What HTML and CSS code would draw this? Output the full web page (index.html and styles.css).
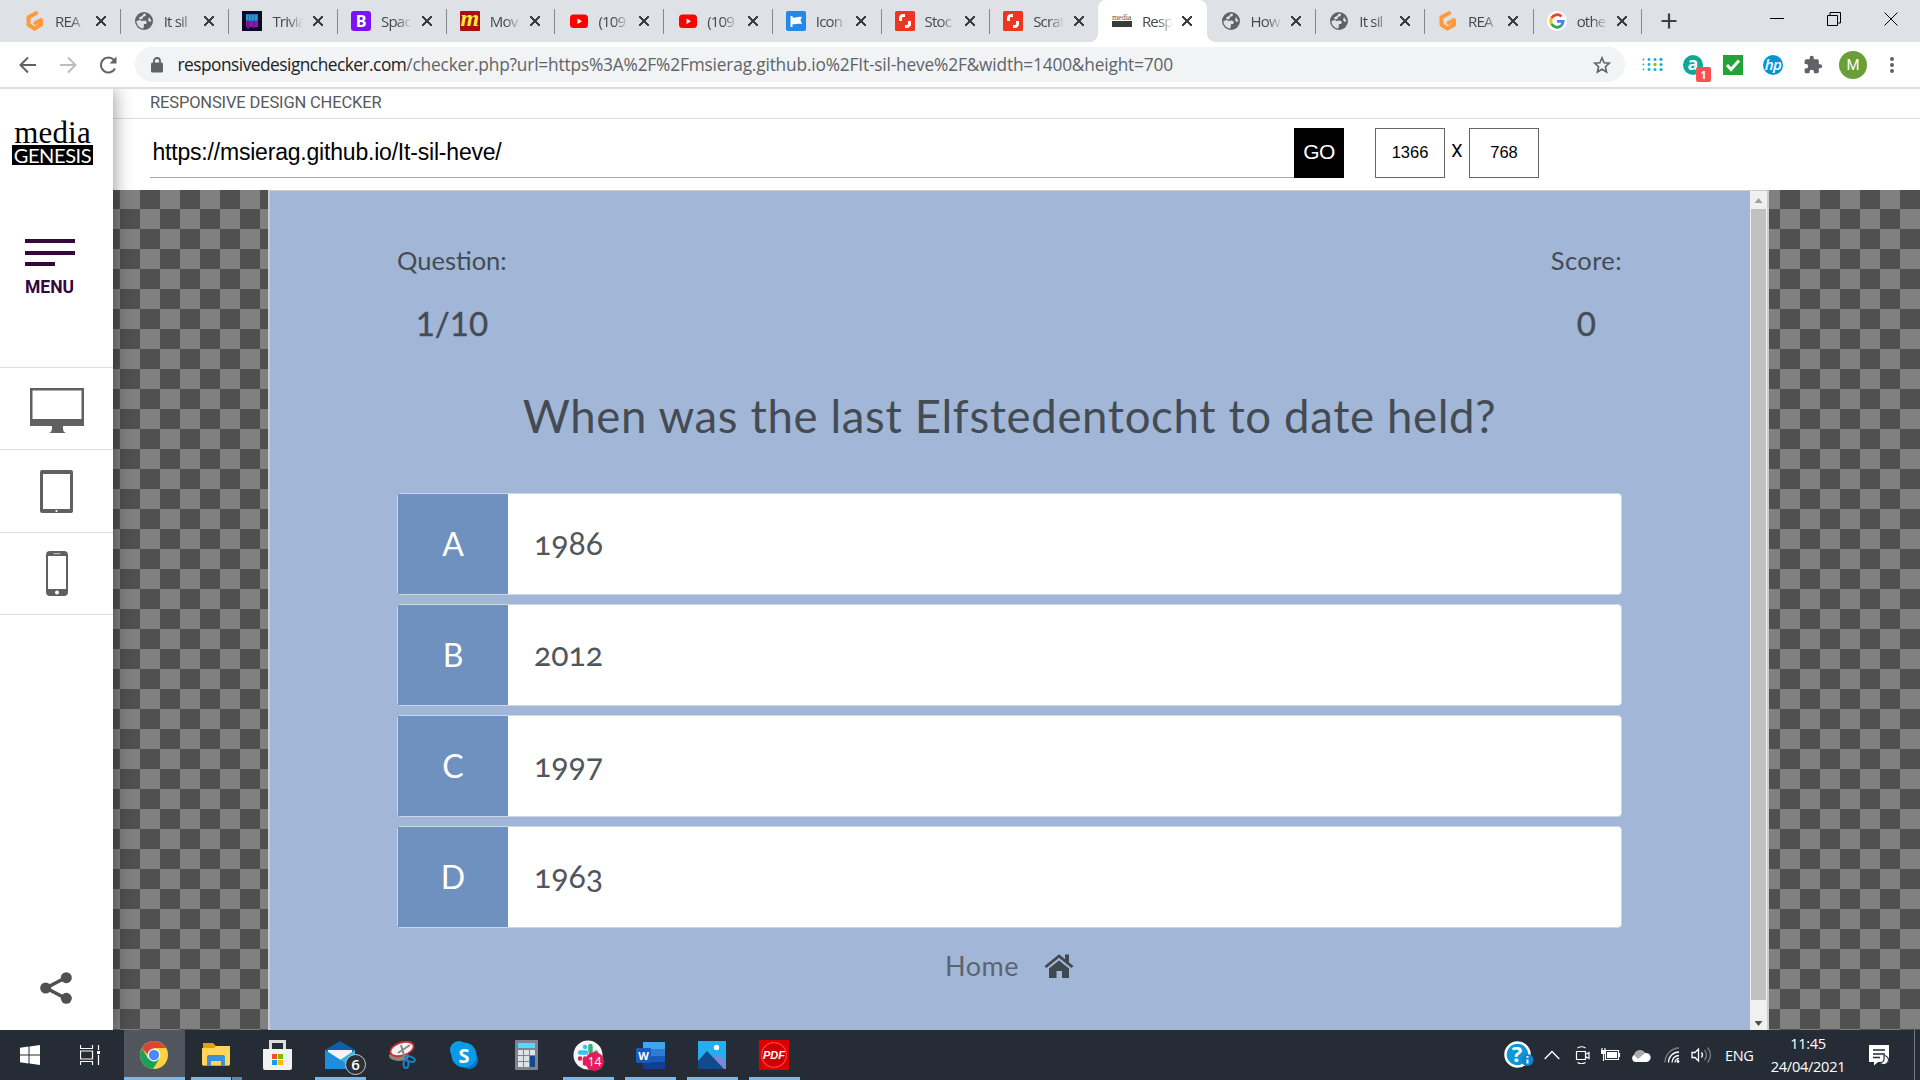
FILE: index.html
```
<!DOCTYPE html>
<html lang="en">
<head>
<meta charset="utf-8">
<title>Responsive Design Checker</title>
<link rel="stylesheet" href="styles.css">
</head>
<body>
<svg class="defs" width="0" height="0">
  <symbol id="globe" viewBox="0 0 20 20"><circle cx="10" cy="10" r="9" fill="#5f6368"/><path d="M10 2.500c2 0 2.500 1 1.500 2.500L9 6l-.5 2L6 8.500 7 10l4-.5 2 1.500-1 2h-2l-.5 4.500C5 17 2.500 14 2.500 10L6 9 5 6.500 8 5zM15 6l2.500 4-2 1-1.500-2z" fill="#dee1e6"/></symbol>
  <symbol id="gitpod" viewBox="0 0 20 20"><path d="M11 2.200 3.500 6.300v7.400l6 3.900 6.500-3.900V9l-5.500 3" fill="none" stroke="#ff9a3c" stroke-width="4" stroke-linejoin="round" stroke-linecap="round"/></symbol>
  <symbol id="youtube" viewBox="0 0 20 20"><rect x="2" y="3.500" width="18" height="13.500" rx="3.500" fill="#f00"/><path d="M9.500 7.500v5.500l4.500-2.750z" fill="#fff"/></symbol>
  <symbol id="shutter" viewBox="0 0 20 20"><rect width="20" height="20" rx="1.500" fill="#ee3524"/><path d="M10 4.500H8a2.500 2.500 0 0 0-2.500 2.500v3M10 15.500h2a2.500 2.500 0 0 0 2.500-2.500v-3" fill="none" stroke="#fff" stroke-width="3"/></symbol>
</svg>

<header class="tabs">
  <div class="tab"><svg class="fav"><use href="#gitpod"/></svg><span class="name">REA</span><span class="x"></span></div>
  <div class="tab"><svg class="fav"><use href="#globe"/></svg><span class="name">It sil</span><span class="x"></span></div>
  <div class="tab"><svg class="fav" viewBox="0 0 20 20"><rect width="20" height="20" fill="#0a0a28"/><rect x="4" y="3" width="12" height="7" fill="#1878b8"/><path d="M5 4v5M8 4v5M11 4v5M14 4v5" stroke="#40b8e0"/><rect x="4" y="10" width="12" height="6" fill="#a010a0"/><path d="M6 10v8M12 11v6" stroke="#5a1aa0" stroke-width="2"/></svg><span class="name">Trivia</span><span class="x"></span></div>
  <div class="tab"><span class="fav letter purple">B</span><span class="name">Spac</span><span class="x"></span></div>
  <div class="tab"><span class="fav letter red">m</span><span class="name">Mov</span><span class="x"></span></div>
  <div class="tab"><svg class="fav"><use href="#youtube"/></svg><span class="name">(109</span><span class="x"></span></div>
  <div class="tab"><svg class="fav"><use href="#youtube"/></svg><span class="name">(109</span><span class="x"></span></div>
  <div class="tab"><svg class="fav" viewBox="0 0 20 20"><rect width="20" height="20" rx="2" fill="#228ae6"/><path d="M5.500 5v11" stroke="#fff" stroke-width="2"/><path d="M6 6c3 2 5-1 10 0l-1.500 3 1.500 4c-5-1-7 1-10 0z" fill="#fff"/></svg><span class="name">Icon</span><span class="x"></span></div>
  <div class="tab"><svg class="fav"><use href="#shutter"/></svg><span class="name">Stoc</span><span class="x"></span></div>
  <div class="tab"><svg class="fav"><use href="#shutter"/></svg><span class="name">Scrat</span><span class="x"></span></div>
  <div class="tab active"><span class="fav mini"><i>media</i><b></b></span><span class="name">Resp</span><span class="x"></span></div>
  <div class="tab"><svg class="fav"><use href="#globe"/></svg><span class="name">How</span><span class="x"></span></div>
  <div class="tab"><svg class="fav"><use href="#globe"/></svg><span class="name">It sil</span><span class="x"></span></div>
  <div class="tab"><svg class="fav"><use href="#gitpod"/></svg><span class="name">REA</span><span class="x"></span></div>
  <div class="tab"><svg class="fav" viewBox="0 0 20 20"><circle cx="10" cy="10" r="10" fill="#fff"/><g fill="none" stroke-width="2.800"><path d="M14.500 5.600A6.200 6.200 0 0 0 4.600 7" stroke="#ea4335"/><path d="M4.600 7a6.200 6.200 0 0 0 0 6" stroke="#fbbc05"/><path d="M4.600 13a6.200 6.200 0 0 0 9.600 1.600" stroke="#34a853"/><path d="M14.200 14.600A6.200 6.200 0 0 0 16.200 10.300H10" stroke="#4285f4"/></g></svg><span class="name">othe</span><span class="x"></span></div>
  <svg class="plus" viewBox="0 0 16 16"><path d="M8 .5v15M.5 8h15" stroke="#3c4043" stroke-width="2.200"/></svg>
  <div class="wincontrols">
    <svg width="14" height="14"><path d="M0 6.500h14" stroke="#000"/></svg>
    <svg width="14" height="14"><path d="M.5 3.500h10v10H.5zM3 3V.5h10.500V11H11" fill="none" stroke="#000"/></svg>
    <svg width="14" height="14"><path d="M.5.5l13 13M13.500.5l-13 13" stroke="#000"/></svg>
  </div>
</header>

<nav class="toolbar">
  <svg class="nav" viewBox="0 0 20 20"><path d="M18 10H3M10 2.500 2.500 10l7.500 7.500" stroke="#5f6368"/></svg>
  <svg class="nav" viewBox="0 0 20 20"><path d="M2 10h15M10 2.500l7.500 7.500-7.500 7.500" stroke="#babcbe"/></svg>
  <svg class="nav" viewBox="0 0 20 20"><path d="M17 13.500A7.500 7.500 0 1 1 16 5" stroke="#5f6368"/><path d="M18.500 1.500V8.500h-7z" fill="#5f6368"/></svg>
  <div class="omnibox">
    <svg width="12" height="16" viewBox="0 0 12 16"><rect x="0" y="5.500" width="12" height="10" rx="1.500" fill="#5f6368"/><path d="M3 6V4a3 3 0 0 1 6 0v2" fill="none" stroke="#5f6368" stroke-width="1.800"/></svg>
    <span class="address"><b>responsivedesignchecker.com</b>/checker.php?url=https%3A%2F%2Fmsierag.github.io%2FIt-sil-heve%2F&amp;width=1400&amp;height=700</span>
    <svg width="18" height="18" viewBox="0 0 18 18"><path d="M9 1.800l2.100 5 5.300.4-4 3.500 1.200 5.300L9 13.200 4.400 16l1.200-5.300-4-3.500 5.300-.4z" fill="none" stroke="#5f6368" stroke-width="1.600"/></svg>
  </div>
  <div class="extensions">
    <svg width="21" height="13" viewBox="0 0 21 13" fill="#12b0e4"><circle cx="1.500" cy="1.500" r=".9"/><circle cx="1.500" cy="6.500" r=".9"/><circle cx="1.500" cy="11.500" r=".9"/><circle cx="7" cy="1.500" r="1.400"/><circle cx="7" cy="6.500" r="1.400"/><circle cx="7" cy="11.500" r="1.400"/><circle cx="13" cy="1.500" r="1.500"/><circle cx="13" cy="6.500" r="1.700" fill="#8cc220"/><circle cx="13" cy="11.500" r="1.500"/><circle cx="19" cy="1.500" r="1.600"/><circle cx="19" cy="6.500" r="1.600"/><circle cx="19" cy="11.500" r="1.600"/></svg>
    <span class="ext teal">a<em>1</em></span>
    <svg width="20" height="20"><rect width="20" height="20" fill="#21a336"/><path d="M4 10l4 4.500 8-9" fill="none" stroke="#fff" stroke-width="3"/></svg>
    <span class="ext hp">hp</span>
    <svg width="20" height="20" viewBox="0 0 24 24"><path fill="#5f6368" d="M20.500 11H19V7a2 2 0 0 0-2-2h-4V3.500a2.500 2.500 0 0 0-5 0V5H4a2 2 0 0 0-2 2v3.800h1.500a2.700 2.700 0 0 1 0 5.400H2V20a2 2 0 0 0 2 2h3.800v-1.500a2.700 2.700 0 0 1 5.400 0V22H17a2 2 0 0 0 2-2v-4h1.500a2.500 2.500 0 0 0 0-5z"/></svg>
    <span class="avatar">M</span>
    <svg width="4" height="18"><circle cx="2" cy="3" r="2" fill="#5f6368"/><circle cx="2" cy="9" r="2" fill="#5f6368"/><circle cx="2" cy="15" r="2" fill="#5f6368"/></svg>
  </div>
</nav>

<div class="page">
  <aside class="sidebar">
    <div class="brand"><span class="media">media</span><span class="genesis">GENESIS</span></div>
    <div class="menu"><i></i><i></i><i></i><span>MENU</span></div>
    <div class="device"><svg class="monitor" width="54" height="47" viewBox="0 0 54 47"><path fill-rule="evenodd" d="M0 1h54v38H0zM2.500 3.500v28.500h49v-28.500zM22 39h11c0 5 .5 6 3 7H19c2.500-1 3-2 3-7z" fill="#606060"/></svg></div>
    <div class="device"><svg class="tablet" width="33" height="43" viewBox="0 0 33 43"><path fill-rule="evenodd" d="M2 0h29a2 2 0 0 1 2 2v39a2 2 0 0 1-2 2H2a2 2 0 0 1-2-2V2a2 2 0 0 1 2-2zM3 4v35h27V4z" fill="#606060"/><circle cx="16.500" cy="41" r="1.100" fill="#fff"/></svg></div>
    <div class="device"><svg width="22" height="45" viewBox="0 0 22 45"><path fill-rule="evenodd" d="M4 0h14a4 4 0 0 1 4 4v37a4 4 0 0 1-4 4H4a4 4 0 0 1-4-4V4a4 4 0 0 1 4-4zM2 5v33h18V5z" fill="#606060"/><path d="M7.500 2.700h7" stroke="#ccc"/><circle cx="11" cy="41.500" r="2" fill="#fff"/></svg></div>
    <div class="share"><svg width="32" height="32" viewBox="0 0 32 32"><path d="M26 5.500 6 16l20 10.500" fill="none" stroke="#505050" stroke-width="3.500"/><circle cx="5.700" cy="16" r="5.500" fill="#505050"/><circle cx="26.300" cy="5.700" r="5.500" fill="#505050"/><circle cx="26.300" cy="26.300" r="5.500" fill="#505050"/></svg></div>
  </aside>
  <main class="main">
    <div class="titlebar"><span>RESPONSIVE DESIGN CHECKER</span></div>
    <div class="form">
      <div class="url">https://msierag.github.io/It-sil-heve/</div>
      <div class="go">GO</div>
      <div class="size">1366</div><span class="by">X</span><div class="size">768</div>
    </div>
    <div class="stage">
      <div class="frame">
        <div class="quiz">
          <div class="hud">
            <div><p class="lbl">Question:</p><p class="val">1/10</p></div>
            <div><p class="lbl wide">Score:</p><p class="val">0</p></div>
          </div>
          <h1>When was the last Elfstedentocht to date held?</h1>
          <div class="choices">
            <div class="choice"><b>A</b><span>1986</span></div>
            <div class="choice"><b>B</b><span>2012</span></div>
            <div class="choice"><b>C</b><span>1997</span></div>
            <div class="choice"><b>D</b><span>1963</span></div>
          </div>
          <div class="home"><span>Home</span><svg width="30" height="24" viewBox="0 0 30 24"><path d="M1.500 13 15 2l13.500 11" fill="none" stroke="#3f474f" stroke-width="2.800"/><path d="M21 .5h4V9l-4-3.500zM15 6.500 25 14.500V24h-7v-7h-5.500v7H5v-9.500z" fill="#3f474f"/></svg></div>
        </div>
        <div class="scroll"><i class="up"></i><div class="thumb"></div><i class="down"></i></div>
      </div>
    </div>
  </main>
</div>

<footer class="taskbar">
  <div class="slot narrow"><svg width="20" height="20" viewBox="0 0 20 20"><path d="M0 2.800 8.500 1.600V9.500H0zM9.500 1.400 20 0v9.500H9.500zM0 10.500h8.500v8L0 17.300zM9.500 10.500H20V20L9.500 18.600z" fill="#fff"/></svg></div>
  <div class="slot narrow"><svg width="20" height="20" viewBox="0 0 20 20"><path d="M.5 0v3.500h12V0M.5 20v-3.500h12V20M.5 6h12v8H.5zM18.500 0v5M18.500 10v10" fill="none" stroke="#fff" stroke-width="1.200"/><rect x="17" y="6" width="3" height="3" fill="#fff"/></svg></div>
  <div class="slot current"><svg width="28" height="28" viewBox="0 0 28 28"><circle cx="14" cy="14" r="14" fill="#fdd23e"/><path d="M1.900 7A14 14 0 0 1 26.100 7H14v14z" fill="#db4437"/><path d="M1.900 7A14 14 0 0 0 13 28l6.500-10.500H8z" fill="#1a9f5c"/><circle cx="14" cy="14" r="6.400" fill="#fff"/><circle cx="14" cy="14" r="5.200" fill="#4c8bf5"/></svg></div>
  <div class="slot open multi"><svg width="28" height="24" viewBox="0 0 28 24"><path d="M1 0h10l3 3h13v20H1z" fill="#e2a106"/><path d="M0 5h12l2-2h14v19H0z" fill="#ffd65c"/><path d="M5 14q0-2 2-2h14q2 0 2 2v9h-4v-5H9v5H5z" fill="#3a93d8"/></svg></div>
  <div class="slot store"><svg width="29" height="31" viewBox="0 0 29 31"><path d="M7.500 9V1.500h14V9" fill="none" stroke="#ddd" stroke-width="3"/><path d="M0 9h29v19q0 2-2 2H2q-2 0-2-2z" fill="#f2f2f2"/><path d="M9 14h5v5H9z" fill="#f25022"/><path d="M15 14h5v5h-5z" fill="#7fba00"/><path d="M9 20h5v5H9z" fill="#00a4ef"/><path d="M15 20h5v5h-5z" fill="#ffb900"/></svg></div>
  <div class="slot open"><svg width="30" height="28" viewBox="0 0 30 28"><path d="M0 9 15 0l15 9v3H0z" fill="#0f5ea8"/><path d="M3 9h24v10H3z" fill="#f4f4f4"/><path d="M0 9l15 10L30 9v19H0z" fill="#32b5ee"/><path d="M0 9l22 14 8 5H0z" fill="#1e8edb"/></svg><span class="badge dark">6</span></div>
  <div class="slot"><svg width="28" height="28" viewBox="0 0 28 28"><ellipse cx="11" cy="15" rx="10" ry="5" fill="#888"/><ellipse cx="14" cy="8" rx="12" ry="6.500" transform="rotate(-18 14 8)" fill="#f4f4f4" stroke="#c8312e" stroke-width="1.800"/><path d="M13 4l4 14M22 4 10 12" stroke="#888" stroke-width="2"/><g fill="none" stroke="#1883c4" stroke-width="2"><ellipse cx="22" cy="18" rx="5" ry="2.500" transform="rotate(20 22 18)"/><ellipse cx="18" cy="23" rx="2.500" ry="4"/></g></svg></div>
  <div class="slot"><svg width="28" height="28" viewBox="0 0 28 28"><circle cx="9" cy="9" r="9" fill="#0f9fe8"/><circle cx="19" cy="19" r="9" fill="#0078d4"/><circle cx="14" cy="14" r="12.500" fill="#0a9be6"/><text x="14" y="21.500" class="skype">S</text></svg></div>
  <div class="slot"><svg width="23" height="30" viewBox="0 0 23 30"><rect width="23" height="30" rx="1" fill="#7c858f"/><path d="M3 3h17v5H3z" fill="#50dcff"/><path d="M3 10h5v5H3zM9 10h5v5H9zM15 10h5v5h-5zM3 16h5v5H3zM9 16h5v5H9zM3 22h5v5H3zM9 22h5v5H9z" fill="#dfe3e8"/><path d="M15 16h5v11h-5z" fill="#144a8c"/></svg></div>
  <div class="slot open"><svg width="30" height="30" viewBox="0 0 30 30"><circle cx="15" cy="15" r="14.500" fill="#f6f6f6"/><g stroke-width="4.400" stroke-linecap="round"><path d="M12 7v.1M7 12.500h6" stroke="#36c5f0"/><path d="M17.500 6v6M23 12.500h.1" stroke="#2eb67d"/><path d="M7 18.500h.1M12 18.500v5" stroke="#e01e5a"/></g></svg><span class="badge pink">14</span></div>
  <div class="slot open"><svg width="29" height="27" viewBox="0 0 29 27"><path d="M7 0h22v7H7z" fill="#41a5ee"/><path d="M7 7h22v7H7z" fill="#2b7cd3"/><path d="M7 14h22v6H7z" fill="#185abd"/><path d="M7 20h22v7H7z" fill="#103f91"/><rect y="6" width="15" height="15" rx="1" fill="#185abd"/><text x="7.500" y="17.500" class="word">W</text></svg></div>
  <div class="slot open"><svg width="28" height="28" viewBox="0 0 28 28"><path d="M0 0h28v28H0z" fill="#23aef0"/><path d="M12 22l8-9 8 8v7H12z" fill="#7a88d6"/><path d="M0 20 9 10l17 18H0z" fill="#144a8c"/><circle cx="18.500" cy="6.500" r="2.700" fill="#fff"/></svg></div>
  <div class="slot open"><span class="pdf">PDF</span></div>
  <div class="tray">
    <svg class="t-help" width="30" height="28" viewBox="0 0 30 28"><circle cx="13.500" cy="13.500" r="12" fill="#0e97d8" stroke="#fff" stroke-width="2.500"/><text x="13" y="21" class="q-mark">?</text><circle cx="23.500" cy="19" r="6" fill="#0e86cf"/><path d="M23.500 18.500v4M23.500 15v1.800" stroke="#fff" stroke-width="2"/></svg>
    <svg class="t-chev" width="16" height="10"><path d="M.7 9 8 1.500 15.300 9" fill="none" stroke="#fff" stroke-width="1.300"/></svg>
    <svg class="t-cam" width="16" height="18" viewBox="0 0 16 18"><path d="M1.500 5.500h9v8h-9zM10.500 8.500 14 6.500v6l-3.500-2M2.500 2Q6.500-.5 10.500 2M2.500 16.500q4 2.500 8 0" fill="none" stroke="#fff" stroke-width="1.200"/></svg>
    <svg class="t-bat" width="20" height="14" viewBox="0 0 20 14"><path d="M4.500 2.500h13v9H4.500zM18.500 5v4M1 0v2M4 0v2M2.500 6v7" fill="none" stroke="#fff" stroke-width="1.200"/><path d="M6 4h10v6H6zM0 2h5v4H0z" fill="#fff"/></svg>
    <svg class="t-cloud" width="20" height="13" viewBox="0 0 20 13"><path d="M4 13a4 4 0 0 1-.5-7.500A6 6 0 0 1 14 4a4.500 4.500 0 0 1 2 9z" fill="#fff"/><path d="M3 6a6 6 0 0 1 11-2l-7 6z" fill="#aaa"/></svg>
    <svg class="t-wifi" width="16" height="16" viewBox="0 0 16 16" fill="none" stroke-width="1.300"><path d="M1 15.500A14.500 14.500 0 0 1 15 1" stroke="#7a8088"/><path d="M4.500 15.500A10.500 10.500 0 0 1 15 5M8 15.500A7 7 0 0 1 15 8.500M11 15.500a4 4 0 0 1 4-4" stroke="#fff"/><circle cx="14" cy="14.500" r="1.400" fill="#fff"/></svg>
    <svg class="t-vol" width="21" height="16" viewBox="0 0 21 16" fill="none" stroke-width="1.300"><path d="M1 5.500h3L7.500 2v12L4 10.500H1zM10.500 5.500q2 2.500 0 5" stroke="#fff"/><path d="M13.500 3q4 5 0 10M16.500.5q6 7.500 0 15" stroke="#7a8088"/></svg>
    <span class="lang">ENG</span>
    <div class="clock"><span>11:45</span><span>24/04/2021</span></div>
    <svg class="t-note" width="21" height="21" viewBox="0 0 21 21"><path d="M0 0h20v17H9l-4 3.500V17H0z" fill="#fff"/><path d="M4 5h12M4 9h12M4 12.500h7" stroke="#252c36" stroke-width="1.300"/><path d="M15 10.500a4.600 4.600 0 1 1-4 7q5 .5 4-7z" fill="#fff" stroke="#252c36" stroke-width="1.200"/></svg>
    <i class="peek"></i>
  </div>
</footer>
</body>
</html>
```
FILE: styles.css
```
* { box-sizing: border-box; }
body { margin: 0; width: 1920px; height: 1080px; overflow: hidden; display: flex; flex-direction: column; background: #fff; font-family: "Open Sans", sans-serif; }
svg { display: block; flex: none; }
p, h1 { margin: 0; font-weight: 400; }
.defs { position: absolute; }

/* browser tabs */
.tabs { height: 42px; flex: none; background: #dee1e6; display: flex; align-items: center; padding-left: 11px; }
.tab { width: 108.700px; height: 42px; flex: none; display: flex; align-items: center; padding-left: 14px; position: relative; }
.tab::after { content: ""; position: absolute; right: -1px; top: 9px; width: 1px; height: 25px; background: #85888c; }
.fav { width: 20px; height: 20px; }
.name { width: 31px; margin-left: 10px; font-size: 15px; letter-spacing: -.8px; color: #45494d; overflow: hidden; white-space: nowrap; -webkit-mask-image: linear-gradient(90deg, #000 50%, transparent); mask-image: linear-gradient(90deg, #000 50%, transparent); }
.x { width: 10px; height: 10px; margin-left: 9.500px; background: linear-gradient(45deg, transparent 43%, #3c4043 43% 57%, transparent 57%), linear-gradient(-45deg, transparent 43%, #3c4043 43% 57%, transparent 57%); }
.letter { border-radius: 3px; color: #fff; text-align: center; font: 700 16px/20px "Open Sans", sans-serif; }
.purple { background: #7a12f5; }
.red { background: #a80f0f; color: #ffe83a; border-radius: 1px; font: italic 700 24px/15px "Liberation Serif", serif; }
.active { background: #fff; border-radius: 8px 8px 0 0; }
.active::before { content: ""; position: absolute; left: -8px; right: -8px; bottom: 0; height: 8px; background: radial-gradient(circle at 0 0, transparent 7.500px, #fff 8px) 0 0 / 8px 8px no-repeat, radial-gradient(circle at 100% 0, transparent 7.500px, #fff 8px) 100% 0 / 8px 8px no-repeat; }
.active::after, .tab:has(+ .active)::after { display: none; }
.mini { display: flex; flex-direction: column; justify-content: center; }
.mini i { font: 8px/6px "Liberation Serif", serif; color: #555; }
.mini b { background: #3a3a3a; height: 6px; }
.plus { width: 16px; height: 16px; margin-left: 20px; }
.wincontrols { margin-left: auto; display: flex; gap: 43px; padding: 0 22px 4px 0; }

/* address bar */
.toolbar { height: 47px; flex: none; display: flex; align-items: center; padding-left: 18px; border-bottom: 2px solid #dadce0; }
.nav { width: 20px; height: 20px; margin-right: 20px; fill: none; stroke-width: 2; }
.omnibox { width: 1490px; height: 35px; margin-left: -3px; border-radius: 18px; background: #f1f3f4; display: flex; align-items: center; padding: 0 14px 0 16px; }
.address { flex: 1; margin-left: 14.500px; font-size: 17.300px; letter-spacing: -.17px; color: #5f6368; white-space: nowrap; }
.address b { font-weight: 400; color: #202124; letter-spacing: -.5px; }
.extensions { display: flex; align-items: center; gap: 20px; padding-left: 17px; }
.ext { width: 20px; height: 20px; border-radius: 50%; color: #fff; text-align: center; font: 700 18px/17px "Open Sans", sans-serif; position: relative; }
.teal { background: #0fa898; }
.ext em { position: absolute; left: 13px; top: 12px; width: 15px; height: 15px; border-radius: 2px; background: #fc4f4f; font: 700 11px/15px "Open Sans", sans-serif; }
.hp { background: #0096d6; font: italic 600 15px/18px "Open Sans", sans-serif; letter-spacing: -.5px; }
.avatar { width: 28px; height: 28px; border-radius: 50%; background: #689f38; color: #fff; text-align: center; font: 15px/28px Roboto, sans-serif; margin: 0 3px 0 -4px; }

/* checker page */
.page { flex: 1; display: flex; min-height: 0; }
.sidebar { width: 113px; flex: none; background: #fff; display: flex; flex-direction: column; position: relative; box-shadow: 0 0 18px rgba(0,0,0,.45); clip-path: inset(0 -20px 0 0); }
.brand { height: 150px; padding: 28px 0 0 12px; display: flex; flex-direction: column; }
.media { width: 81px; height: 28px; text-align: center; font: 31px/31px "Liberation Serif", serif; letter-spacing: .2px; color: #000; }
.genesis { width: 81px; height: 20px; background: #000; color: #fff; text-align: center; font: 20px/20px Lato, sans-serif; letter-spacing: -.4px; }
.menu { height: 128px; padding-left: 25px; display: flex; flex-direction: column; gap: 7.500px; }
.menu i { width: 50px; height: 4px; background: #35083c; }
.menu i:nth-child(3) { width: 30px; }
.menu span { margin-top: 3px; font: 700 17.500px/20px Roboto, sans-serif; color: #35083c; letter-spacing: 0; }
.device { height: 82.300px; border-top: 1px solid #ddd; display: flex; align-items: center; justify-content: center; }
.monitor { margin-top: 3px; }
.tablet { margin-top: 1px; }
.share { flex: 1; border-top: 1px solid #ddd; display: flex; align-items: flex-end; justify-content: center; padding: 0 1px 26px 0; }
.main { flex: 1; display: flex; flex-direction: column; }
.titlebar { height: 30px; border-bottom: 1px solid #ddd; padding-left: 37px; font: 16.500px/27px Roboto, sans-serif; color: #58595b; letter-spacing: -.15px; }
.form { height: 71px; padding: 9px 0 12px 37px; display: flex; align-items: stretch; font-family: "Liberation Sans", sans-serif; color: #000; }
.url { width: 1144px; border-bottom: 1px solid #aaa; padding-left: 2.500px; font-size: 23px; letter-spacing: -.2px; line-height: 48px; }
.go { width: 50px; background: #000; color: #fff; text-align: center; font-size: 21px; letter-spacing: -.5px; line-height: 48px; margin-right: 31px; }
.size { width: 70px; border: 1px solid #666; text-align: center; font-size: 16.500px; line-height: 47px; }
.by { width: 24px; text-align: center; font: 18px/46px Roboto, sans-serif; }
.stage { flex: 1; padding-left: 155px; background: conic-gradient(#505050 25%, #808080 0 50%, #505050 0 75%, #808080 0) 7px -1px / 40px 40px; display: flex; }
.frame { width: 1501px; border: solid #ccc; border-width: 1px 2px 0; display: flex; }
.quiz { flex: 1; background: #a2b7d7; padding: 0 128px 0 127px; font-family: Lato, sans-serif; color: #444b53; }
.hud { display: flex; justify-content: space-between; text-align: center; padding-top: 51px; height: 176px; }
.lbl { font-size: 25.500px; line-height: 36px; letter-spacing: 0; }
.wide { letter-spacing: .4px; }
.val { font-size: 33px; line-height: 44px; margin-top: 23px; -webkit-text-stroke: .4px; }
h1 { text-align: center; font-size: 45.500px; letter-spacing: .650px; line-height: 98px; white-space: nowrap; }
.choices { margin-top: 28px; display: flex; flex-direction: column; gap: 9px; }
.choice { height: 102px; border: 1px solid #ccd6e4; border-radius: 4px; background: #fff; display: flex; align-items: center; }
.choice b { width: 110px; height: 100px; background: #6f91c0; color: #fff; font-weight: 400; font-size: 32px; line-height: 99px; text-align: center; }
.choice span { margin: 0 0 4px 26px; font-size: 32px; font-variant-numeric: oldstyle-nums; color: #50565c; }
.home { display: flex; align-items: center; justify-content: center; gap: 25px; padding-top: 18px; font-size: 27px; letter-spacing: .5px; line-height: 40px; }
.home span { color: #5b656f; }
.scroll { width: 17px; background: #f0f0f0; display: flex; flex-direction: column; align-items: center; }
.up, .down { width: 8px; flex: none; }
.up { height: 18px; background: #a0a0a0; clip-path: polygon(50% 7px, 100% 12px, 0 12px); }
.down { height: 30px; background: #505050; clip-path: polygon(0 21px, 100% 21px, 50% 26px); }
.thumb { flex: 1; width: 15px; background: #c1c1c1; }

/* taskbar */
.taskbar { height: 50px; flex: none; background: #252c36; display: flex; color: #fff; }
.slot { width: 62px; height: 50px; display: flex; align-items: center; justify-content: center; position: relative; padding-right: 2px; }
.narrow { width: 60px; padding: 0; }
.narrow + .narrow { width: 64px; padding-right: 4px; }
.current { background: #50555e; width: 61px; border-bottom: 3px solid #76b9ed; margin-right: 1px; padding-top: 3px; }
.store { padding-right: 3px; }
.open::after { content: ""; position: absolute; left: 5px; bottom: 0; width: 51px; height: 3px; background: #76b9ed; }
.multi::after { background: linear-gradient(90deg, #76b9ed 40px, #252c36 40px 41px, #5a89ae 41px); }
.badge { position: absolute; border-radius: 50%; text-align: center; }
.dark { left: 35px; top: 24px; width: 21px; height: 21px; background: #2a3038; border: 1px solid #ccc; font: 600 15px/19px "Open Sans", sans-serif; }
.pink { left: 27px; top: 22px; width: 19px; height: 19px; background: #e01e5a; font: 12px/19px "Open Sans", sans-serif; }
.skype, .word, .q-mark { fill: #fff; text-anchor: middle; font: 700 20px "Open Sans", sans-serif; }
.word { font-size: 11px; }
.q-mark { font-size: 22px; }
.pdf { width: 30px; height: 30px; background: radial-gradient(circle, #c00 54%, #f33 56% 60%, #d00 63%); font: italic 700 11px/31px "Liberation Sans", sans-serif; text-align: center; }
.tray { margin-left: auto; display: flex; align-items: center; }
.t-help { margin-right: 10px; }
.t-chev { margin-right: 15px; }
.t-cam { margin-right: 10px; }
.t-bat { margin-right: 10px; }
.t-cloud { margin-right: 13px; }
.t-wifi { margin-right: 11px; }
.t-vol { margin-right: 13px; }
.lang { width: 30px; font-size: 14.500px; letter-spacing: -.3px; margin-right: 14px; }
.clock { width: 78px; display: flex; flex-direction: column; align-items: center; font-size: 14.600px; line-height: 23px; letter-spacing: -.3px; }
.t-note { margin: 0 24px 0 22px; }
.peek { width: 1px; height: 50px; background: #777c84; margin-right: 5px; }
```
